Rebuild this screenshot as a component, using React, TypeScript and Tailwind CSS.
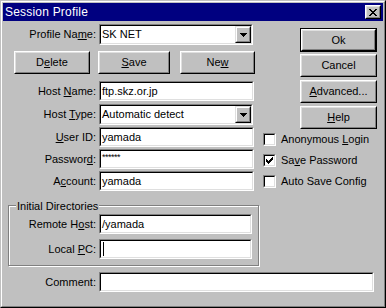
import React from 'react';

function Field({ className = '', children }: { className?: string; children?: React.ReactNode }) {
    return (
        <div className={`border border-t-[#808080] border-l-[#808080] border-b-white border-r-white ${className}`}>
            <div className="h-full w-full border border-t-black border-l-black border-b-[#dfdfdf] border-r-[#dfdfdf] bg-white flex items-center pl-[1px] text-[11px] text-black overflow-hidden whitespace-nowrap">
                {children}
            </div>
        </div>
    );
}

function DropArrow() {
    return (
        <div className="h-full w-[16px] shrink-0 ml-auto border border-t-[#dfdfdf] border-l-[#dfdfdf] border-b-black border-r-black bg-[#c0c0c0]">
            <div className="h-full w-full border border-t-white border-l-white border-b-[#808080] border-r-[#808080] flex items-center justify-center">
                <svg width="7" height="4" viewBox="0 0 7 4" shapeRendering="crispEdges">
                    <path d="M0 0h7v1H0zM1 1h5v1H1zM2 2h3v1H2zM3 3h1v1H3z" fill="#000" />
                </svg>
            </div>
        </div>
    );
}

function Btn({ className = '', children, def = false }: { className?: string; children: React.ReactNode; def?: boolean }) {
    const body = (
        <div className="h-full w-full border border-t-white border-l-white border-b-black border-r-black bg-[#c0c0c0]">
            <div className="h-full w-full border border-t-[#dfdfdf] border-l-[#dfdfdf] border-b-[#808080] border-r-[#808080] flex items-center justify-center text-[11px] text-black">
                {children}
            </div>
        </div>
    );
    if (def) {
        return <div className={`border border-black ${className}`}>{body}</div>;
    }
    return <div className={className}>{body}</div>;
}

function Check({ checked = false, children, className = '' }: { checked?: boolean; children: React.ReactNode; className?: string }) {
    return (
        <div className={`flex items-center h-[13px] ${className}`}>
            <div className="w-[13px] h-[13px] shrink-0 border border-t-[#808080] border-l-[#808080] border-b-white border-r-white">
                <div className="w-full h-full border border-t-black border-l-black border-b-[#dfdfdf] border-r-[#dfdfdf] bg-white flex items-center justify-center">
                    {checked && (
                        <svg width="7" height="7" viewBox="0 0 7 7" shapeRendering="crispEdges">
                            <path d="M6 0h1v3H6zM5 1h1v3H5zM4 2h1v3H4zM3 3h1v3H3zM2 4h1v3H2zM1 3h1v3H1zM0 2h1v3H0z" fill="#000" />
                        </svg>
                    )}
                </div>
            </div>
            <span className="ml-[5px] text-[11px] text-black whitespace-nowrap">{children}</span>
        </div>
    );
}

function Label({ children, className = 'w-[89px]' }: { children: React.ReactNode; className?: string }) {
    return <span className={`${className} shrink-0 text-right text-[11px] text-black whitespace-nowrap pr-[1px]`}>{children}</span>;
}

export default function App() {
    return (
        <div
            className="w-[386px] h-[308px] border border-t-[#c0c0c0] border-l-[#c0c0c0] border-b-black border-r-black bg-[#c0c0c0] select-none"
            style={{ fontFamily: '"Liberation Sans", Arial, sans-serif' }}
        >
            <div className="h-full w-full border border-t-white border-l-white border-b-[#808080] border-r-[#808080] p-px flex flex-col">
                {/* title bar */}
                <div className="h-[18px] shrink-0 bg-[#000080] flex items-center pl-[2px] pr-[2px]">
                    <span className="text-white text-[12px] leading-none tracking-[0.2px]">Session Profile</span>
                    <div className="ml-auto w-[16px] h-[14px] border border-t-white border-l-white border-b-black border-r-black bg-[#c0c0c0]">
                        <div className="h-full w-full border border-t-[#dfdfdf] border-l-[#dfdfdf] border-b-[#808080] border-r-[#808080] flex items-center justify-center">
                            <svg width="8" height="7" viewBox="0 0 8 7" shapeRendering="crispEdges">
                                <path d="M0 0h2v1H0zM6 0h2v1H6zM1 1h2v1H1zM5 1h2v1H5zM2 2h4v1H2zM3 3h2v1H3zM2 4h4v1H2zM1 5h2v1H1zM5 5h2v1H5zM0 6h2v1H0zM6 6h2v1H6z" fill="#000" />
                            </svg>
                        </div>
                    </div>
                </div>

                {/* body */}
                <div className="flex pl-[5px]">
                    {/* left column */}
                    <div className="w-[251px] flex flex-col">
                        <div className="mt-[3px] h-[21px] flex items-center">
                            <Label>Profile Na<u>m</u>e:</Label>
                            <Field className="ml-[2px] w-[154px] h-full">
                                <span>SK NET</span>
                                <DropArrow />
                            </Field>
                        </div>

                        <div className="mt-[6px] h-[23px] flex">
                            <Btn className="ml-[6px] w-[76px] h-full">
                                <span>D<u>e</u>lete</span>
                            </Btn>
                            <Btn className="ml-[8px] w-[72px] h-full">
                                <span><u>S</u>ave</span>
                            </Btn>
                            <Btn className="ml-[10px] w-[75px] h-full">
                                <span>Ne<u>w</u></span>
                            </Btn>
                        </div>

                        <div className="mt-[7px] h-[20px] flex items-center">
                            <Label>Host <u>N</u>ame:</Label>
                            <Field className="ml-[2px] w-[155px] h-full">
                                <span>ftp.skz.or.jp</span>
                            </Field>
                        </div>

                        <div className="mt-[3px] h-[21px] flex items-center">
                            <Label>Host <u>T</u>ype:</Label>
                            <Field className="ml-[2px] w-[154px] h-full">
                                <span>Automatic detect</span>
                                <DropArrow />
                            </Field>
                        </div>

                        <div className="mt-[2px] h-[20px] flex items-center">
                            <Label><u>U</u>ser ID:</Label>
                            <Field className="ml-[2px] w-[155px] h-full">
                                <span>yamada</span>
                            </Field>
                        </div>

                        <div className="mt-[2px] h-[20px] flex items-center">
                            <Label>Passwor<u>d</u>:</Label>
                            <Field className="ml-[2px] w-[155px] h-full">
                                <span className="text-[9px] leading-none self-start mt-[2px] tracking-[-0.5px]">******</span>
                            </Field>
                        </div>

                        <div className="mt-[2px] h-[20px] flex items-center">
                            <Label>A<u>c</u>count:</Label>
                            <Field className="ml-[2px] w-[155px] h-full">
                                <span>yamada</span>
                            </Field>
                        </div>

                        {/* Initial Directories group */}
                        <div className="relative mt-[14px] h-[61px] border border-[#808080] shadow-[inset_1px_1px_0_#fff,1px_1px_0_#fff] flex flex-col">
                            <span className="absolute left-[7px] top-[-8px] px-[1px] bg-[#c0c0c0] text-[11px] text-black whitespace-nowrap">
                                Initial Directories
                            </span>
                            <div className="mt-[8px] h-[20px] flex items-center">
                                <Label className="w-[88px]">Remote H<u>o</u>st:</Label>
                                <Field className="ml-[2px] w-[153px] h-full">
                                    <span>/yamada</span>
                                </Field>
                            </div>
                            <div className="mt-[5px] h-[20px] flex items-center">
                                <Label className="w-[88px]">Local <u>P</u>C:</Label>
                                <Field className="ml-[2px] w-[153px] h-full">
                                    <span className="w-px h-[14px] bg-black ml-[1px]" />
                                </Field>
                            </div>
                        </div>
                    </div>

                    {/* right column */}
                    <div className="ml-[4px] w-[115px] flex flex-col">
                        <Btn def className="mt-[7px] ml-[37px] w-[77px] h-[24px]">
                            <span>Ok</span>
                        </Btn>
                        <Btn className="mt-[2px] ml-[37px] w-[77px] h-[23px]">
                            <span>Cancel</span>
                        </Btn>
                        <Btn className="mt-[3px] ml-[37px] w-[77px] h-[23px]">
                            <span><u>A</u>dvanced...</span>
                        </Btn>
                        <Btn className="mt-[3px] ml-[37px] w-[77px] h-[23px]">
                            <span><u>H</u>elp</span>
                        </Btn>
                        <Check className="mt-[4px]">Anonymous <u>L</u>ogin</Check>
                        <Check checked className="mt-[8px]">Sa<u>v</u>e Password</Check>
                        <Check className="mt-[8px]">Auto Save Config</Check>
                    </div>
                </div>

                {/* comment row */}
                <div className="mt-[6px] pl-[5px] h-[20px] flex items-center">
                    <Label>Comment:</Label>
                    <Field className="ml-[2px] w-[275px] h-full" />
                </div>
            </div>
        </div>
    );
}
